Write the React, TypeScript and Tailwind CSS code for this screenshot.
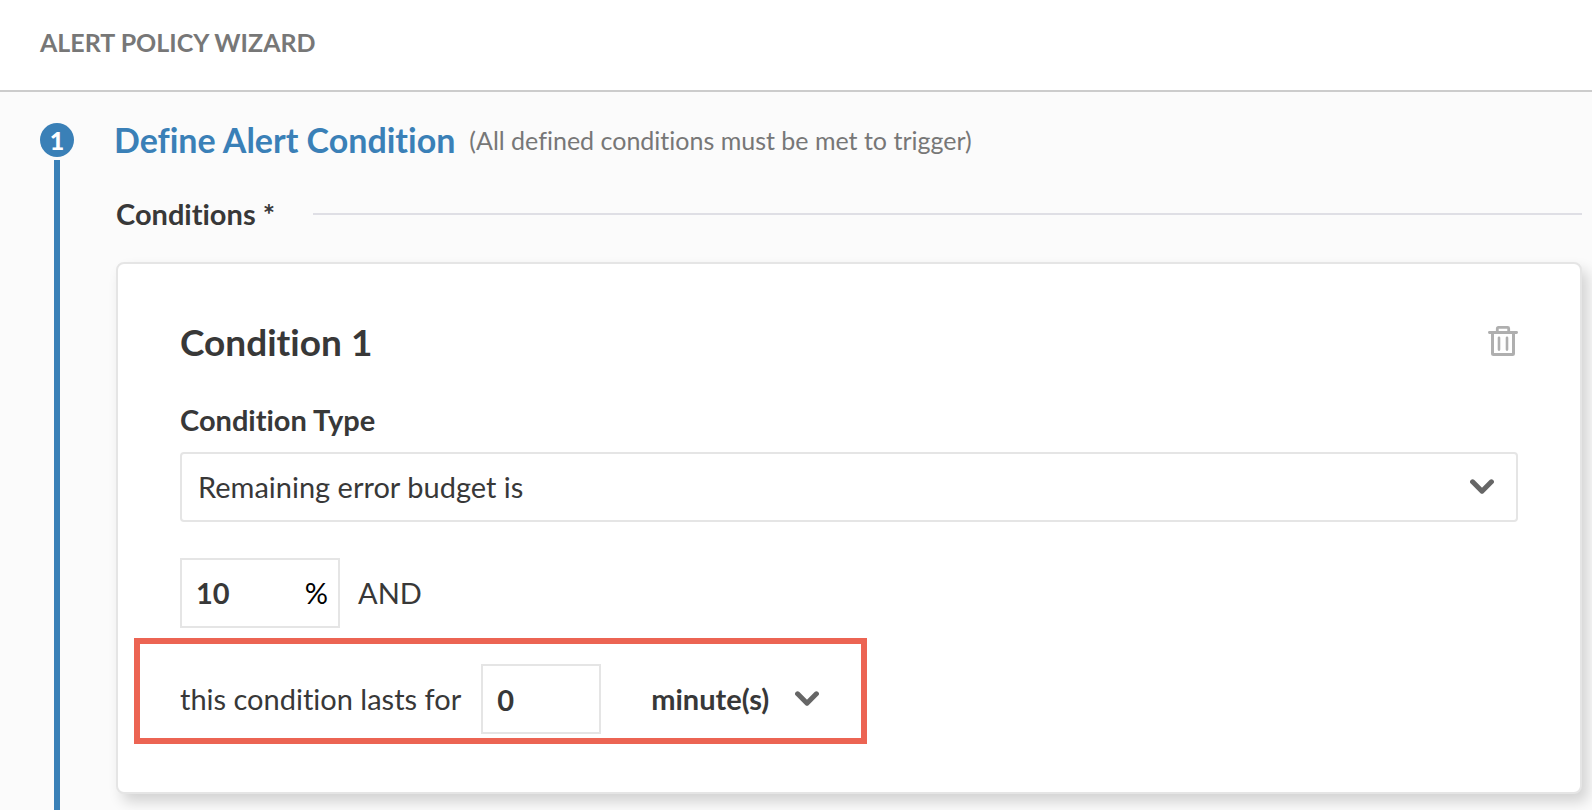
import React, { useState } from "react";

interface ChevronProps {
  className?: string;
}

const conditionTypes = [
  { name: "Remaining error budget is", value: "remaining" },
  { name: "Average error budget burn rate is", value: "burnRate" },
  { name: "Entire error budget would be exhausted", value: "exhausted" },
];

const units = [
  { name: "minute(s)", value: "minute" },
  { name: "hour(s)", value: "hour" },
];

const ChevronIcon = ({ className = "" }: ChevronProps) => (
  <svg
    viewBox="0 0 24 16"
    fill="none"
    stroke="#666666"
    strokeWidth="5"
    strokeLinecap="round"
    strokeLinejoin="round"
    aria-hidden="true"
    className={`pointer-events-none absolute w-6 h-4 ${className}`}
  >
    <path d="M2.6 2.8 12 12.2 21.4 2.8" />
  </svg>
);

const TrashIcon = () => (
  <svg
    viewBox="0 0 30 30"
    fill="none"
    stroke="#afafaf"
    strokeLinecap="round"
    strokeLinejoin="round"
    aria-hidden="true"
    className="block w-[30px] h-[30px]"
  >
    <path strokeWidth="2.8" d="M1.4 6.5h27.2M9.3 6V2.4a1 1 0 0 1 1-1h9.4a1 1 0 0 1 1 1V6" />
    <path strokeWidth="3" d="M4.5 7v20.5a1 1 0 0 0 1 1h19a1 1 0 0 0 1-1V7" />
    <path strokeWidth="2.6" d="M11 11.8v11.8M19 11.8v11.8" />
  </svg>
);

const App = () => {
  const [conditionType, setConditionType] = useState("remaining");
  const [budget, setBudget] = useState("10");
  const [duration, setDuration] = useState("0");
  const [unit, setUnit] = useState("minute");

  return (
    <div className="flex flex-col min-h-screen bg-[#fbfbfb] text-[#383838] font-['Lato',sans-serif] text-[29px] leading-9 [font-variant-ligatures:no-common-ligatures]">
      <header className="bg-white border-b-2 border-[#cccccc] px-10 pt-6 pb-[30px]">
        <h1 className="text-[25px] leading-9 font-bold text-[#777777]">ALERT POLICY WIZARD</h1>
      </header>

      <main className="flex flex-1 pl-10 pr-2">
        <div className="flex flex-col items-center pt-[31px] mr-10">
          <span className="flex items-center justify-center w-[34px] h-[34px] rounded-full bg-[#3a80b7] text-white text-[25px] font-black">
            1
          </span>
          <div className="flex-1 w-[6px] mt-[3px] bg-[#3a80b7]" />
        </div>

        <section className="flex-1 min-w-0 pt-7 pb-4">
          <div className="flex items-center gap-[14px]">
            <h2 className="text-[34px] leading-10 font-bold text-[#3a80b7]">Define Alert Condition</h2>
            <p className="text-[25px] text-[#777777]">(All defined conditions must be met to trigger)</p>
          </div>

          <div className="flex items-center gap-[38px] mt-9 px-[2px]">
            <h3 className="font-bold">Conditions *</h3>
            <div className="flex-1 h-[2px] bg-[#dfdfe5]" />
          </div>

          <div className="mt-[30px] mx-[2px] px-[62px] pt-[58px] pb-12 bg-white border-2 border-[#e5e5e5] rounded-lg shadow-[6px_8px_14px_rgba(0,0,0,0.16)]">
            <div className="flex items-start justify-between">
              <h4 className="text-[37px] leading-10 font-bold">Condition 1</h4>
              <button type="button" title="Delete" className="mt-1 cursor-pointer">
                <TrashIcon />
              </button>
            </div>

            <label htmlFor="conditionType" className="block mt-10 font-bold">
              Condition Type
            </label>
            <div className="relative mt-[14px]">
              <select
                id="conditionType"
                value={conditionType}
                onChange={(e) => setConditionType(e.target.value)}
                className="block appearance-none w-full h-[70px] pl-4 pr-16 bg-white border-2 border-[#e5e5e5] rounded"
              >
                {conditionTypes.map((item) => (
                  <option key={item.value} value={item.value}>
                    {item.name}
                  </option>
                ))}
              </select>
              <ChevronIcon className="right-6 top-[27px]" />
            </div>

            <div className="flex items-center gap-[18px] mt-9">
              <div className="flex items-center w-40 h-[70px] pl-[14px] pr-[10px] border-2 border-[#e5e5e5]">
                <input
                  id="budget"
                  aria-label="Remaining error budget"
                  value={budget}
                  onChange={(e) => setBudget(e.target.value)}
                  className="flex-1 min-w-0 font-bold outline-none"
                />
                <label htmlFor="budget" className="text-black">
                  %
                </label>
              </div>
              <span>AND</span>
            </div>

            <div className="flex items-center w-fit mt-[10px] -ml-[46px] pt-5 pb-1 pl-10 pr-9 border-[6px] border-[#ec6453]">
              <label htmlFor="duration">this condition lasts for</label>
              <input
                id="duration"
                value={duration}
                onChange={(e) => setDuration(e.target.value)}
                className="w-[120px] h-[70px] ml-5 px-[14px] font-bold border-2 border-[#e5e5e5] outline-none"
              />
              <div className="relative ml-12">
                <select
                  aria-label="Duration unit"
                  value={unit}
                  onChange={(e) => setUnit(e.target.value)}
                  className="block appearance-none w-44 h-[70px] pl-[2px] pr-12 font-bold bg-white"
                >
                  {units.map((item) => (
                    <option key={item.value} value={item.value}>
                      {item.name}
                    </option>
                  ))}
                </select>
                <ChevronIcon className="right-[6px] top-[27px]" />
              </div>
            </div>
          </div>
        </section>
      </main>
    </div>
  );
};

export default App;
